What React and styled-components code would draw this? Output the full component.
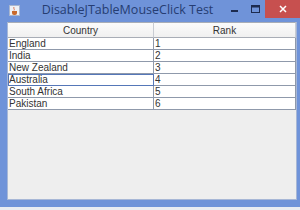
import React from 'react'
import styled, { createGlobalStyle } from 'styled-components'

const GlobalStyle = createGlobalStyle`
  html, body {
    margin: 0;
    padding: 0;
    background: #e9ecf2;
  }
`

const Frame = styled.div`
  width: 300px;
  height: 207px;
  background: #6f93d9;
  display: flex;
  flex-direction: column;
  box-sizing: border-box;
  padding: 0 3px 7px 7px;
`

const TitleBar = styled.div`
  height: 22px;
  display: flex;
  align-items: flex-start;
  margin-left: -7px;
  margin-right: -3px;
`

const AppIcon = styled.div`
  width: 11px;
  height: 11px;
  margin: 5px 0 0 9px;
  background: #eef1f6;
  border: 1px solid #a9b6cf;
  box-sizing: border-box;
  display: flex;
  align-items: center;
  justify-content: center;
`

const Title = styled.div`
  flex: 1;
  text-align: center;
  font-family: "Open Sans", "Noto Sans", sans-serif;
  font-size: 12.5px;
  color: #263d72;
  line-height: 20px;
  padding-left: 10px;
`

const Controls = styled.div`
  display: flex;
  align-items: flex-start;
  height: 18px;
`

const CtrlButton = styled.div`
  width: ${p => p.$wide ? 35 : 20}px;
  height: 18px;
  display: flex;
  align-items: center;
  justify-content: center;
  background: ${p => p.$close ? '#c7504f' : 'transparent'};
`

const Body = styled.div`
  flex: 1;
  background: #eeeeee;
  border: 1px solid #a7b7d6;
  border-top: none;
  display: flex;
  flex-direction: column;
`

const Table = styled.div`
  display: grid;
  grid-template-columns: 146px 1fr;
  font-family: "Liberation Sans", Arial, sans-serif;
  font-size: 10px;
  color: #333;
`

const HeaderCell = styled.div`
  height: 16px;
  box-sizing: border-box;
  background: linear-gradient(#fbfbfb, #f0f0f0);
  border-top: 1px solid #a8adb6;
  border-bottom: 1px solid #a8adb6;
  border-right: 1px solid #c8ccd3;
  text-align: center;
  line-height: 15px;
  color: #333;
`

const Cell = styled.div`
  height: 12px;
  box-sizing: border-box;
  background: #fff;
  border-bottom: 1px solid #8f99ab;
  border-right: 1px solid #8f99ab;
  outline: ${p => p.$focus ? '1px solid #5577b8' : 'none'};
  outline-offset: -1px;
  padding-left: 1px;
  line-height: 12px;
  white-space: nowrap;
  overflow: hidden;
`

const rows = [
  ['England', 1],
  ['India', 2],
  ['New Zealand', 3],
  ['Australia', 4],
  ['South Africa', 5],
  ['Pakistan', 6],
]

export default function App() {
  return (
    <>
      <GlobalStyle />
      <Frame>
        <TitleBar>
          <AppIcon>
            <svg width="7" height="8" viewBox="0 0 7 8">
              <path d="M3 0 C2 1.5 4 2 3 3.5" stroke="#d4562a" strokeWidth="0.8" fill="none" />
              <path d="M1 4 h5 v2 a2 2 0 0 1 -2 2 h-1 a2 2 0 0 1 -2 -2z" fill="#c9692b" />
            </svg>
          </AppIcon>
          <Title>DisableJTableMouseClick Test</Title>
          <Controls>
            <CtrlButton>
              <svg width="8" height="8" viewBox="0 0 8 8"><rect x="0" y="5" width="7" height="2" fill="#1d2b4f" /></svg>
            </CtrlButton>
            <CtrlButton>
              <svg width="9" height="8" viewBox="0 0 9 8"><rect x="0.5" y="0.5" width="8" height="7" fill="none" stroke="#1d2b4f" /><rect x="0.5" y="0.5" width="8" height="2" fill="#1d2b4f" /></svg>
            </CtrlButton>
            <CtrlButton $close $wide>
              <svg width="8" height="8" viewBox="0 0 8 8"><path d="M1 1 L7 7 M7 1 L1 7" stroke="#fff" strokeWidth="1.5" /></svg>
            </CtrlButton>
          </Controls>
        </TitleBar>
        <Body>
          <Table>
            <HeaderCell>Country</HeaderCell>
            <HeaderCell>Rank</HeaderCell>
            {rows.map(([c, r]) => (
              <React.Fragment key={c}>
                <Cell $focus={c === 'Australia'}>{c}</Cell>
                <Cell>{r}</Cell>
              </React.Fragment>
            ))}
          </Table>
        </Body>
      </Frame>
    </>
  )
}
